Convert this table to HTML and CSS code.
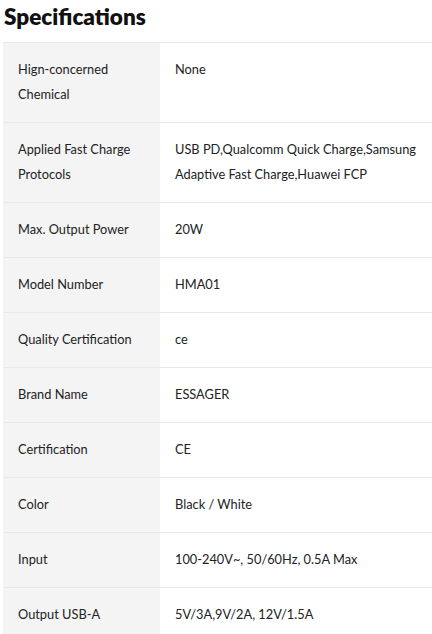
FILE: index.html
```html
<!DOCTYPE html>
<html>
<head>
<meta charset="utf-8">
<link rel="stylesheet" href="styles.css">
</head>
<body>
<div class="page">
  <h2 class="title">Specifications</h2>
  <table class="specs">
    <tr><th>Hign-concerned Chemical</th><td>None</td></tr>
    <tr><th>Applied Fast Charge Protocols</th><td>USB PD,Qualcomm Quick Charge,Samsung Adaptive Fast Charge,Huawei FCP</td></tr>
    <tr><th>Max. Output Power</th><td>20W</td></tr>
    <tr><th>Model Number</th><td>HMA01</td></tr>
    <tr><th>Quality Certification</th><td>ce</td></tr>
    <tr><th>Brand Name</th><td>ESSAGER</td></tr>
    <tr><th>Certification</th><td>CE</td></tr>
    <tr><th>Color</th><td>Black / White</td></tr>
    <tr><th>Input</th><td>100-240V~, 50/60Hz, 0.5A Max</td></tr>
    <tr><th>Output USB-A</th><td>5V/3A,9V/2A, 12V/1.5A</td></tr>
  </table>
</div>
</body>
</html>
```
FILE: styles.css
```css
html, body { margin: 0; padding: 0; background: #fff; }
.page {
  padding: 0 0 0 3px;
  font-family: Lato, "Noto Sans", sans-serif;
  color: #222;
}
.title {
  margin: 0;
  padding: 3px 0 0 1px;
  font-size: 22.5px;
  line-height: 28px;
  font-weight: 800;
  color: #111;
  height: 42px;
  box-sizing: border-box;
}
.specs {
  width: 100%;
  border-collapse: collapse;
  border-top: 1px solid #e8e8e8;
}
.specs th, .specs td {
  text-align: left;
  vertical-align: top;
  font-size: 12.8px;
  font-weight: 400;
  line-height: 25px;
  padding: 14px 15px 15px 15px;
  border-bottom: 1px solid #e8e8e8;
  color: #222;
}
.specs td {
  padding-right: 0;
}
.specs th {
  width: 127px;
  background: #f4f4f4;
}
```
